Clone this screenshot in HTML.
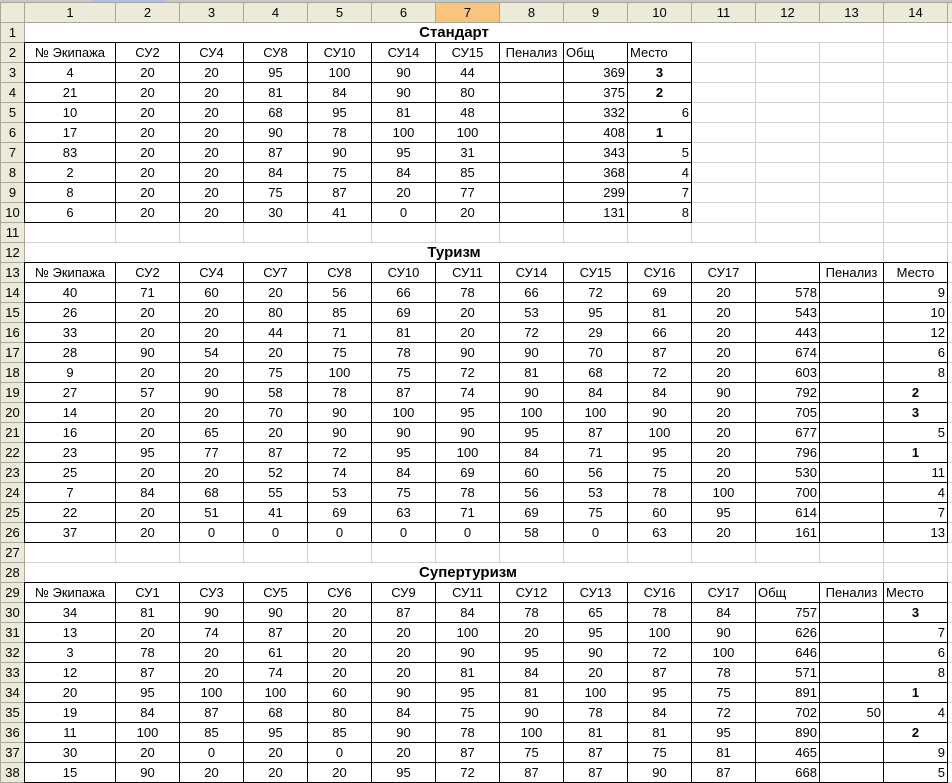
<!DOCTYPE html>
<html><head><meta charset="utf-8"><style>
html,body{margin:0;padding:0;background:#fff;width:952px;height:780px;overflow:hidden}
.top{position:absolute;left:0;top:0;width:952px;height:3px;background:#c8c8c8}
.top i{position:absolute;left:92px;width:74px;top:0;height:3px;background:#a9c3e8}
table{position:absolute;left:0;top:2px;width:967px;border-collapse:collapse;table-layout:fixed;font-family:"Liberation Sans",Arial,sans-serif;font-size:13px;color:#000}
td{border:1px solid #cfcfcf;height:19px;padding:0 2px;text-align:center;white-space:nowrap;overflow:hidden;line-height:18px}
tr.h td{background:#ecead9;border-color:#a8a79a;height:19px;font-size:13px}
td.n{background:#ecead9;border-color:#a8a79a;text-align:center;padding:0}
td.o{background:#f8c47e !important}
tr.s td:nth-child(n+2):nth-child(-n+11){border:1px double #000}
tr.t td:nth-child(n+2):nth-child(-n+15){border:1px double #000}
.r{text-align:right}.l{text-align:left}.b{font-weight:bold}
.ti{font-weight:bold;font-size:15px}
</style></head><body>
<div class="top"><i></i></div>
<table>
<colgroup><col style="width:24px"><col style="width:91px"><col style="width:64px"><col style="width:64px"><col style="width:64px"><col style="width:64px"><col style="width:64px"><col style="width:64px"><col style="width:64px"><col style="width:64px"><col style="width:64px"><col style="width:64px"><col style="width:64px"><col style="width:64px"><col style="width:64px"><col style="width:20px"></colgroup>
<tr class="h"><td></td><td>1</td><td>2</td><td>3</td><td>4</td><td>5</td><td>6</td><td class="o">7</td><td>8</td><td>9</td><td>10</td><td>11</td><td>12</td><td>13</td><td>14</td><td></td></tr>
<tr><td class="n">1</td><td colspan="13" class="ti">Стандарт</td><td></td><td></td></tr>
<tr class="s"><td class="n">2</td><td>№ Экипажа</td><td>СУ2</td><td>СУ4</td><td>СУ8</td><td>СУ10</td><td>СУ14</td><td>СУ15</td><td>Пенализ</td><td class="l">Общ</td><td class="l">Место</td><td></td><td></td><td></td><td></td><td></td></tr>
<tr class="s"><td class="n">3</td><td>4</td><td>20</td><td>20</td><td>95</td><td>100</td><td>90</td><td>44</td><td></td><td class="r">369</td><td class="b">3</td><td></td><td></td><td></td><td></td><td></td></tr>
<tr class="s"><td class="n">4</td><td>21</td><td>20</td><td>20</td><td>81</td><td>84</td><td>90</td><td>80</td><td></td><td class="r">375</td><td class="b">2</td><td></td><td></td><td></td><td></td><td></td></tr>
<tr class="s"><td class="n">5</td><td>10</td><td>20</td><td>20</td><td>68</td><td>95</td><td>81</td><td>48</td><td></td><td class="r">332</td><td class="r">6</td><td></td><td></td><td></td><td></td><td></td></tr>
<tr class="s"><td class="n">6</td><td>17</td><td>20</td><td>20</td><td>90</td><td>78</td><td>100</td><td>100</td><td></td><td class="r">408</td><td class="b">1</td><td></td><td></td><td></td><td></td><td></td></tr>
<tr class="s"><td class="n">7</td><td>83</td><td>20</td><td>20</td><td>87</td><td>90</td><td>95</td><td>31</td><td></td><td class="r">343</td><td class="r">5</td><td></td><td></td><td></td><td></td><td></td></tr>
<tr class="s"><td class="n">8</td><td>2</td><td>20</td><td>20</td><td>84</td><td>75</td><td>84</td><td>85</td><td></td><td class="r">368</td><td class="r">4</td><td></td><td></td><td></td><td></td><td></td></tr>
<tr class="s"><td class="n">9</td><td>8</td><td>20</td><td>20</td><td>75</td><td>87</td><td>20</td><td>77</td><td></td><td class="r">299</td><td class="r">7</td><td></td><td></td><td></td><td></td><td></td></tr>
<tr class="s"><td class="n">10</td><td>6</td><td>20</td><td>20</td><td>30</td><td>41</td><td>0</td><td>20</td><td></td><td class="r">131</td><td class="r">8</td><td></td><td></td><td></td><td></td><td></td></tr>
<tr><td class="n">11</td><td></td><td></td><td></td><td></td><td></td><td></td><td></td><td></td><td></td><td></td><td></td><td></td><td></td><td></td><td></td></tr>
<tr><td class="n">12</td><td colspan="13" class="ti">Туризм</td><td></td><td></td></tr>
<tr class="t"><td class="n">13</td><td>№ Экипажа</td><td>СУ2</td><td>СУ4</td><td>СУ7</td><td>СУ8</td><td>СУ10</td><td>СУ11</td><td>СУ14</td><td>СУ15</td><td>СУ16</td><td>СУ17</td><td></td><td>Пенализ</td><td>Место</td><td></td></tr>
<tr class="t"><td class="n">14</td><td>40</td><td>71</td><td>60</td><td>20</td><td>56</td><td>66</td><td>78</td><td>66</td><td>72</td><td>69</td><td>20</td><td class="r">578</td><td></td><td class="r">9</td><td></td></tr>
<tr class="t"><td class="n">15</td><td>26</td><td>20</td><td>20</td><td>80</td><td>85</td><td>69</td><td>20</td><td>53</td><td>95</td><td>81</td><td>20</td><td class="r">543</td><td></td><td class="r">10</td><td></td></tr>
<tr class="t"><td class="n">16</td><td>33</td><td>20</td><td>20</td><td>44</td><td>71</td><td>81</td><td>20</td><td>72</td><td>29</td><td>66</td><td>20</td><td class="r">443</td><td></td><td class="r">12</td><td></td></tr>
<tr class="t"><td class="n">17</td><td>28</td><td>90</td><td>54</td><td>20</td><td>75</td><td>78</td><td>90</td><td>90</td><td>70</td><td>87</td><td>20</td><td class="r">674</td><td></td><td class="r">6</td><td></td></tr>
<tr class="t"><td class="n">18</td><td>9</td><td>20</td><td>20</td><td>75</td><td>100</td><td>75</td><td>72</td><td>81</td><td>68</td><td>72</td><td>20</td><td class="r">603</td><td></td><td class="r">8</td><td></td></tr>
<tr class="t"><td class="n">19</td><td>27</td><td>57</td><td>90</td><td>58</td><td>78</td><td>87</td><td>74</td><td>90</td><td>84</td><td>84</td><td>90</td><td class="r">792</td><td></td><td class="b">2</td><td></td></tr>
<tr class="t"><td class="n">20</td><td>14</td><td>20</td><td>20</td><td>70</td><td>90</td><td>100</td><td>95</td><td>100</td><td>100</td><td>90</td><td>20</td><td class="r">705</td><td></td><td class="b">3</td><td></td></tr>
<tr class="t"><td class="n">21</td><td>16</td><td>20</td><td>65</td><td>20</td><td>90</td><td>90</td><td>90</td><td>95</td><td>87</td><td>100</td><td>20</td><td class="r">677</td><td></td><td class="r">5</td><td></td></tr>
<tr class="t"><td class="n">22</td><td>23</td><td>95</td><td>77</td><td>87</td><td>72</td><td>95</td><td>100</td><td>84</td><td>71</td><td>95</td><td>20</td><td class="r">796</td><td></td><td class="b">1</td><td></td></tr>
<tr class="t"><td class="n">23</td><td>25</td><td>20</td><td>20</td><td>52</td><td>74</td><td>84</td><td>69</td><td>60</td><td>56</td><td>75</td><td>20</td><td class="r">530</td><td></td><td class="r">11</td><td></td></tr>
<tr class="t"><td class="n">24</td><td>7</td><td>84</td><td>68</td><td>55</td><td>53</td><td>75</td><td>78</td><td>56</td><td>53</td><td>78</td><td>100</td><td class="r">700</td><td></td><td class="r">4</td><td></td></tr>
<tr class="t"><td class="n">25</td><td>22</td><td>20</td><td>51</td><td>41</td><td>69</td><td>63</td><td>71</td><td>69</td><td>75</td><td>60</td><td>95</td><td class="r">614</td><td></td><td class="r">7</td><td></td></tr>
<tr class="t"><td class="n">26</td><td>37</td><td>20</td><td>0</td><td>0</td><td>0</td><td>0</td><td>0</td><td>58</td><td>0</td><td>63</td><td>20</td><td class="r">161</td><td></td><td class="r">13</td><td></td></tr>
<tr><td class="n">27</td><td></td><td></td><td></td><td></td><td></td><td></td><td></td><td></td><td></td><td></td><td></td><td></td><td></td><td></td><td></td></tr>
<tr><td class="n">28</td><td colspan="13" class="ti" style="padding-left:30px">Супертуризм</td><td></td><td></td></tr>
<tr class="t"><td class="n">29</td><td>№ Экипажа</td><td>СУ1</td><td>СУ3</td><td>СУ5</td><td>СУ6</td><td>СУ9</td><td>СУ11</td><td>СУ12</td><td>СУ13</td><td>СУ16</td><td>СУ17</td><td class="l">Общ</td><td>Пенализ</td><td class="l">Место</td><td></td></tr>
<tr class="t"><td class="n">30</td><td>34</td><td>81</td><td>90</td><td>90</td><td>20</td><td>87</td><td>84</td><td>78</td><td>65</td><td>78</td><td>84</td><td class="r">757</td><td></td><td class="b">3</td><td></td></tr>
<tr class="t"><td class="n">31</td><td>13</td><td>20</td><td>74</td><td>87</td><td>20</td><td>20</td><td>100</td><td>20</td><td>95</td><td>100</td><td>90</td><td class="r">626</td><td></td><td class="r">7</td><td></td></tr>
<tr class="t"><td class="n">32</td><td>3</td><td>78</td><td>20</td><td>61</td><td>20</td><td>20</td><td>90</td><td>95</td><td>90</td><td>72</td><td>100</td><td class="r">646</td><td></td><td class="r">6</td><td></td></tr>
<tr class="t"><td class="n">33</td><td>12</td><td>87</td><td>20</td><td>74</td><td>20</td><td>20</td><td>81</td><td>84</td><td>20</td><td>87</td><td>78</td><td class="r">571</td><td></td><td class="r">8</td><td></td></tr>
<tr class="t"><td class="n">34</td><td>20</td><td>95</td><td>100</td><td>100</td><td>60</td><td>90</td><td>95</td><td>81</td><td>100</td><td>95</td><td>75</td><td class="r">891</td><td></td><td class="b">1</td><td></td></tr>
<tr class="t"><td class="n">35</td><td>19</td><td>84</td><td>87</td><td>68</td><td>80</td><td>84</td><td>75</td><td>90</td><td>78</td><td>84</td><td>72</td><td class="r">702</td><td class="r">50</td><td class="r">4</td><td></td></tr>
<tr class="t"><td class="n">36</td><td>11</td><td>100</td><td>85</td><td>95</td><td>85</td><td>90</td><td>78</td><td>100</td><td>81</td><td>81</td><td>95</td><td class="r">890</td><td></td><td class="b">2</td><td></td></tr>
<tr class="t"><td class="n">37</td><td>30</td><td>20</td><td>0</td><td>20</td><td>0</td><td>20</td><td>87</td><td>75</td><td>87</td><td>75</td><td>81</td><td class="r">465</td><td></td><td class="r">9</td><td></td></tr>
<tr class="t"><td class="n">38</td><td>15</td><td>90</td><td>20</td><td>20</td><td>20</td><td>95</td><td>72</td><td>87</td><td>87</td><td>90</td><td>87</td><td class="r">668</td><td></td><td class="r">5</td><td></td></tr>
</table>
</body></html>
